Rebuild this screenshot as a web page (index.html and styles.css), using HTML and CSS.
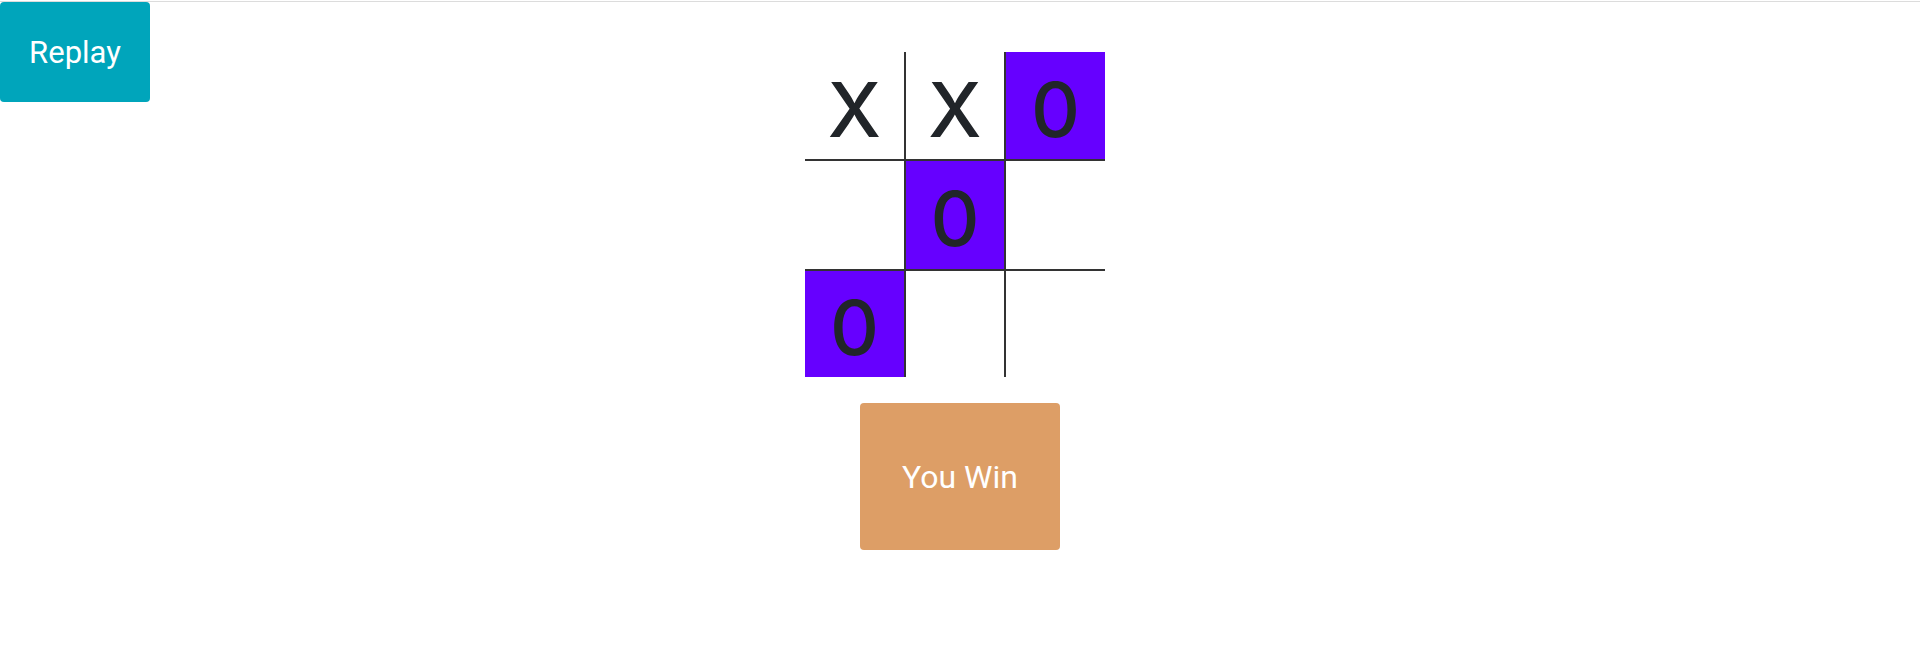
FILE: index.html
```html
<!DOCTYPE html>
<html lang="en">
<head>
<meta charset="utf-8">
<title>Tic Tac Toe</title>
<link rel="stylesheet" href="styles.css">
</head>
<body>
<div class="topline"></div>
<main class="layout">
  <button class="replay">Replay</button>
  <section class="game">
    <div class="board">
      <div class="cell r c1">X</div>
      <div class="cell r c2">X</div>
      <div class="cell r c3 win">0</div>
      <div class="cell r2 c1"></div>
      <div class="cell r2 c2 win">0</div>
      <div class="cell r2 c3"></div>
      <div class="cell r3 c1 win">0</div>
      <div class="cell r3 c2"></div>
      <div class="cell r3 c3"></div>
    </div>
    <div class="result">You Win</div>
  </section>
  <div class="spacer"></div>
</main>
</body>
</html>
```

FILE: styles.css
```css
html, body {
  margin: 0;
  padding: 0;
  background: #ffffff;
}

body {
  font-family: Roboto, "Liberation Sans", Arial, sans-serif;
  color: #212529;
}

.topline {
  margin-top: 1px;
  height: 1px;
  background: #dcdcdc;
}

.layout {
  display: grid;
  grid-template-columns: 1fr 300px 1fr;
  align-items: start;
}

.replay {
  justify-self: start;
  width: 150px;
  height: 100px;
  border: none;
  border-radius: 4px;
  background: #00a5bb;
  color: #ffffff;
  font-family: Roboto, "Liberation Sans", Arial, sans-serif;
  font-size: 31px;
  padding: 0;
  cursor: pointer;
}

.game {
  padding-top: 50px;
  display: flex;
  flex-direction: column;
  align-items: center;
}

.board {
  display: grid;
  grid-template-columns: 100px 100px 100px;
  grid-template-rows: 108px 110px 107px;
  margin-left: -10px;
}

.cell {
  box-sizing: border-box;
  display: flex;
  align-items: center;
  justify-content: center;
  font-family: Inter, Roboto, sans-serif;
  font-size: 76px;
  font-weight: 500;
  line-height: 1;
  padding-top: 6px;
  color: #212529;
  border: 0 solid #333333;
}

.r { border-bottom-width: 1px; }
.r2 { border-top-width: 1px; border-bottom-width: 1px; }
.r3 { border-top-width: 1px; }
.c1 { border-right-width: 1px; }
.c2 { border-left-width: 1px; border-right-width: 1px; }
.c3 { border-left-width: 1px; }

.win {
  background: #6600ff;
}

.result {
  margin-top: 26px;
  width: 200px;
  height: 147px;
  border-radius: 4px;
  background: #dd9e66;
  color: #ffffff;
  font-size: 32px;
  display: flex;
  align-items: center;
  justify-content: center;
}
```
